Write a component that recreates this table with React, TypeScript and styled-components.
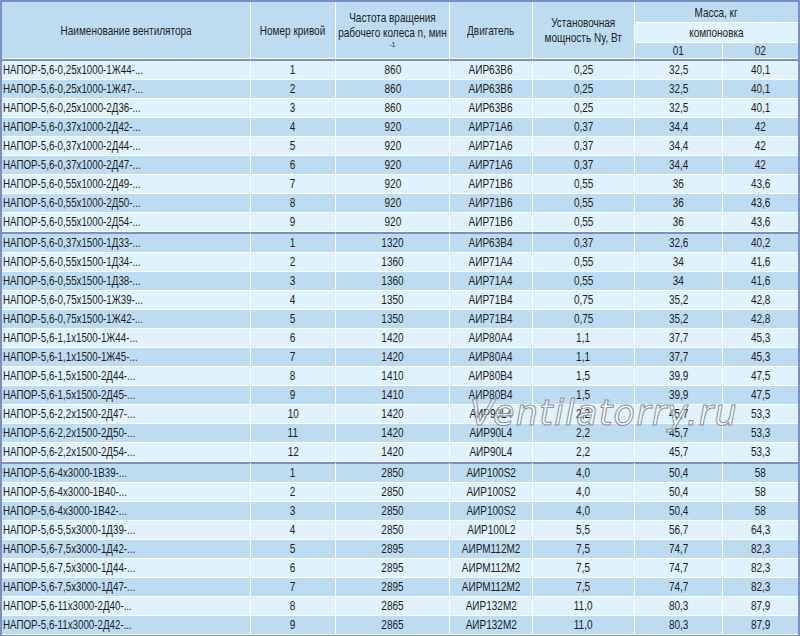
import React from "react";
import styled, { createGlobalStyle, css } from "styled-components";

const GlobalStyle = createGlobalStyle`
  html, body { margin: 0; padding: 0; background: #ffffff; }
  body { font-family: "Liberation Sans", Arial, sans-serif; }
`;

const BORDER = "#7d8fc2";
const DARK = "#bddcf2";
const LIGHT = "#e0f2fc";

const Wrap = styled.div`
  position: relative;
  width: 800px;
`;

const Table = styled.table`
  width: 800px;
  border-collapse: separate;
  border-spacing: 0;
  table-layout: fixed;
  border: 2px solid ${BORDER};
  box-sizing: border-box;
  font-family: "Liberation Sans", Arial, sans-serif;
  font-size: 13px;
  color: #1c1c1c;
`;

/* the reference uses a narrow face: squeeze the regular face horizontally */
const Squeeze = styled.span<{ $left?: boolean; $scale?: number }>`
  display: inline-block;
  white-space: nowrap;
  text-align: center;
  transform: scaleX(${(p) => p.$scale ?? 0.77});
  transform-origin: ${(p) => (p.$left ? "left center" : "center center")};
  margin: ${(p) => (p.$left ? "0" : "0 -40px")};
`;

const HeadCell = styled.th<{ $light?: boolean; $h?: number; $last?: boolean }>`
  background: ${(p) => (p.$light ? LIGHT : DARK)};
  font-weight: normal;
  text-align: center;
  vertical-align: middle;
  padding: 0;
  line-height: 15px;
  border-right: ${(p) => (p.$last ? "none" : "1px solid #fff")};
  border-bottom: 1px solid #fff;
  height: ${(p) => (p.$h ? `${p.$h}px` : "auto")};
  box-sizing: content-box;
  white-space: nowrap;
  overflow: hidden;
  color: #222;
`;

const Sup = styled.span`
  display: block;
  font-size: 8px;
  line-height: 8px;
  margin-top: 1px;
`;

const Row = styled.tr<{ $dark: boolean; $first: boolean }>`
  background: ${(p) => (p.$dark ? DARK : LIGHT)};
  ${(p) =>
    p.$first &&
    css`
      & > td {
        border-top: 2px solid ${BORDER};
      }
    `}
`;

const Cell = styled.td<{ $left?: boolean }>`
  height: 18px;
  padding: 0 0 0 ${(p) => (p.$left ? "1px" : "0")};
  line-height: 18px;
  text-align: ${(p) => (p.$left ? "left" : "center")};
  border-right: 1px solid #fff;
  border-bottom: 1px solid #fff;
  white-space: nowrap;
  overflow: hidden;
  box-sizing: content-box;
  &:last-child {
    border-right: none;
  }
`;

const Watermark = styled.div`
  position: absolute;
  left: 470px;
  top: 396px;
  font-family: "DejaVu Sans", "Liberation Sans", sans-serif;
  font-style: italic;
  font-size: 35px;
  line-height: 35px;
  letter-spacing: 1.2px;
  color: rgba(255, 255, 255, 0.55);
  -webkit-text-stroke: 1px #8a9096;
  pointer-events: none;
  white-space: nowrap;
`;

type R = [string, string, string, string, string, string, string];

const groups: R[][] = [
  [
    ["НАПОР-5,6-0,25x1000-1Ж44-...", "1", "860", "АИР63В6", "0,25", "32,5", "40,1"],
    ["НАПОР-5,6-0,25x1000-1Ж47-...", "2", "860", "АИР63В6", "0,25", "32,5", "40,1"],
    ["НАПОР-5,6-0,25x1000-2Д36-...", "3", "860", "АИР63В6", "0,25", "32,5", "40,1"],
    ["НАПОР-5,6-0,37x1000-2Д42-...", "4", "920", "АИР71А6", "0,37", "34,4", "42"],
    ["НАПОР-5,6-0,37x1000-2Д44-...", "5", "920", "АИР71А6", "0,37", "34,4", "42"],
    ["НАПОР-5,6-0,37x1000-2Д47-...", "6", "920", "АИР71А6", "0,37", "34,4", "42"],
    ["НАПОР-5,6-0,55x1000-2Д49-...", "7", "920", "АИР71В6", "0,55", "36", "43,6"],
    ["НАПОР-5,6-0,55x1000-2Д50-...", "8", "920", "АИР71В6", "0,55", "36", "43,6"],
    ["НАПОР-5,6-0,55x1000-2Д54-...", "9", "920", "АИР71В6", "0,55", "36", "43,6"],
  ],
  [
    ["НАПОР-5,6-0,37x1500-1Д33-...", "1", "1320", "АИР63В4", "0,37", "32,6", "40,2"],
    ["НАПОР-5,6-0,55x1500-1Д34-...", "2", "1360", "АИР71А4", "0,55", "34", "41,6"],
    ["НАПОР-5,6-0,55x1500-1Д38-...", "3", "1360", "АИР71А4", "0,55", "34", "41,6"],
    ["НАПОР-5,6-0,75x1500-1Ж39-...", "4", "1350", "АИР71В4", "0,75", "35,2", "42,8"],
    ["НАПОР-5,6-0,75x1500-1Ж42-...", "5", "1350", "АИР71В4", "0,75", "35,2", "42,8"],
    ["НАПОР-5,6-1,1x1500-1Ж44-...", "6", "1420", "АИР80А4", "1,1", "37,7", "45,3"],
    ["НАПОР-5,6-1,1x1500-1Ж45-...", "7", "1420", "АИР80А4", "1,1", "37,7", "45,3"],
    ["НАПОР-5,6-1,5x1500-2Д44-...", "8", "1410", "АИР80В4", "1,5", "39,9", "47,5"],
    ["НАПОР-5,6-1,5x1500-2Д45-...", "9", "1410", "АИР80В4", "1,5", "39,9", "47,5"],
    ["НАПОР-5,6-2,2x1500-2Д47-...", "10", "1420", "АИР90L4", "2,2", "45,7", "53,3"],
    ["НАПОР-5,6-2,2x1500-2Д50-...", "11", "1420", "АИР90L4", "2,2", "45,7", "53,3"],
    ["НАПОР-5,6-2,2x1500-2Д54-...", "12", "1420", "АИР90L4", "2,2", "45,7", "53,3"],
  ],
  [
    ["НАПОР-5,6-4x3000-1В39-...", "1", "2850", "АИР100S2", "4,0", "50,4", "58"],
    ["НАПОР-5,6-4x3000-1В40-...", "2", "2850", "АИР100S2", "4,0", "50,4", "58"],
    ["НАПОР-5,6-4x3000-1В42-...", "3", "2850", "АИР100S2", "4,0", "50,4", "58"],
    ["НАПОР-5,6-5,5x3000-1Д39-...", "4", "2850", "АИР100L2", "5,5", "56,7", "64,3"],
    ["НАПОР-5,6-7,5x3000-1Д42-...", "5", "2895", "АИРМ112М2", "7,5", "74,7", "82,3"],
    ["НАПОР-5,6-7,5x3000-1Д44-...", "6", "2895", "АИРМ112М2", "7,5", "74,7", "82,3"],
    ["НАПОР-5,6-7,5x3000-1Д47-...", "7", "2895", "АИРМ112М2", "7,5", "74,7", "82,3"],
    ["НАПОР-5,6-11x3000-2Д40-...", "8", "2865", "АИР132М2", "11,0", "80,3", "87,9"],
    ["НАПОР-5,6-11x3000-2Д42-...", "9", "2865", "АИР132М2", "11,0", "80,3", "87,9"],
  ],
];

const widths = [249, 85, 114, 83, 102, 88, 75];

export default function App() {
  let idx = 0;
  return (
    <>
      <GlobalStyle />
      <Wrap>
        <Table>
          <colgroup>
            {widths.map((w, i) => (
              <col key={i} style={{ width: w }} />
            ))}
          </colgroup>
          <thead>
            <tr>
              <HeadCell rowSpan={3}>
                <Squeeze>Наименование вентилятора</Squeeze>
              </HeadCell>
              <HeadCell rowSpan={3}>
                <Squeeze>Номер кривой</Squeeze>
              </HeadCell>
              <HeadCell rowSpan={3}>
                <Squeeze>
                  Частота вращения
                  <br />
                  рабочего колеса n, мин
                  <Sup>-1</Sup>
                </Squeeze>
              </HeadCell>
              <HeadCell rowSpan={3}>
                <Squeeze>Двигатель</Squeeze>
              </HeadCell>
              <HeadCell rowSpan={3}>
                <Squeeze>
                  Установочная
                  <br />
                  мощность Ny, Вт
                </Squeeze>
              </HeadCell>
              <HeadCell colSpan={2} $h={20} $last>
                <Squeeze>Масса, кг</Squeeze>
              </HeadCell>
            </tr>
            <tr>
              <HeadCell colSpan={2} $h={19} $light $last>
                <Squeeze>компоновка</Squeeze>
              </HeadCell>
            </tr>
            <tr>
              <HeadCell $h={13}>
                <Squeeze>01</Squeeze>
              </HeadCell>
              <HeadCell $h={13} $last>
                <Squeeze>02</Squeeze>
              </HeadCell>
            </tr>
          </thead>
          {groups.map((g, gi) => (
            <tbody key={gi}>
              {g.map((r, ri) => {
                const dark = idx % 2 === 1;
                idx++;
                return (
                  <Row key={ri} $dark={dark} $first={ri === 0}>
                    {r.map((c, ci) => (
                      <Cell key={ci} $left={ci === 0}>
                        <Squeeze $left={ci === 0} $scale={ci === 0 ? 0.75 : 0.77}>
                          {c}
                        </Squeeze>
                      </Cell>
                    ))}
                  </Row>
                );
              })}
            </tbody>
          ))}
        </Table>
        <Watermark>Ventilatorry.ru</Watermark>
      </Wrap>
    </>
  );
}
